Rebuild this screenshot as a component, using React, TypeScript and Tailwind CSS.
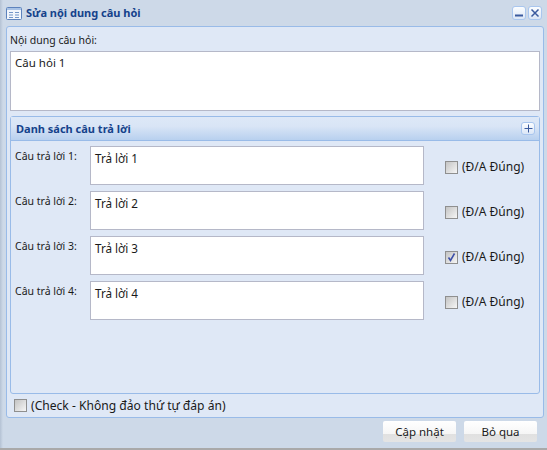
function Check({ checked = false }: { checked?: boolean }) {
  return (
    <span className="w-[13px] h-[13px] shrink-0 border border-[#8f8f8f] bg-gradient-to-br from-[#c4c4c4] to-[#f6f6f6] flex items-center justify-center">
      {checked && (
        <svg width="11" height="11" viewBox="0 0 11 11">
          <path d="M2.5 5.5 L4.5 8.5 L8.5 1.5" fill="none" stroke="#3c4fa8" strokeWidth="1.6" />
        </svg>
      )}
    </span>
  );
}

function ToolBtn({ children, size }: { children: React.ReactNode; size: string }) {
  return (
    <span className={`${size} rounded-[3px] border border-[#a9c6ee] bg-gradient-to-b from-[#fbfdff] to-[#dbe6f6] flex items-center justify-center`}>
      {children}
    </span>
  );
}

const answers = [
  { label: "Câu trả lời 1:", value: "Trả lời 1", checked: false },
  { label: "Câu trả lời 2:", value: "Trả lời 2", checked: false },
  { label: "Câu trả lời 3:", value: "Trả lời 3", checked: true },
  { label: "Câu trả lời 4:", value: "Trả lời 4", checked: false },
];

export default function App() {
  return (
    <div
      className="w-[547px] h-[450px] overflow-hidden bg-[#a9a9a9] text-[12px] leading-[14px] text-[#1a1a1a]"
      style={{ fontFamily: '"Noto Sans", "DejaVu Sans", sans-serif' }}
    >
      <div className="h-[448px] bg-[linear-gradient(90deg,#b4c2d4_0px,#cdd9e8_3px,#cdd9e8_100%)] flex flex-col">
        <div className="h-[26px] shrink-0 flex items-center pl-[6px] pr-[5px]">
          <svg width="16" height="13" viewBox="0 0 16 13" className="mr-[4px]">
            <rect x="0.5" y="0.5" width="15" height="12" rx="1" fill="#f2f6fc" stroke="#5d83bd" />
            <rect x="1" y="1" width="14" height="2" fill="#a9c3e6" />
            <path d="M3 5.5 H7 M3 8 H7 M3 10.5 H7 M9 5.5 H13 M9 8 H13 M9 10.5 H13" stroke="#7396c8" strokeWidth="1" />
          </svg>
          <span className="font-bold text-[#15428b] text-[11px]">Sửa nội dung câu hỏi</span>
          <div className="ml-auto flex gap-[2px]">
            <ToolBtn size="w-[14px] h-[14px]">
              <svg width="10" height="10" viewBox="0 0 10 10"><path d="M1 7.5 H9" stroke="#3a5a9e" strokeWidth="2" /></svg>
            </ToolBtn>
            <ToolBtn size="w-[14px] h-[14px]">
              <svg width="10" height="10" viewBox="0 0 10 10"><path d="M1.5 1.5 L8.5 8.5 M8.5 1.5 L1.5 8.5" stroke="#3a5a9e" strokeWidth="1.5" /></svg>
            </ToolBtn>
          </div>
        </div>

        <div className="ml-[6px] mr-[3px] h-[392px] shrink-0 border border-[#99bbe8] rounded-[3px] bg-[#dfe8f6] px-[3px] flex flex-col">
          <div className="h-[24px] shrink-0 flex items-center pt-[1px] text-[10.5px]">Nội dung câu hỏi:</div>
          <div className="h-[60px] shrink-0 bg-white border border-[#b5b8c8] px-[4px] pt-[3px] text-[11.5px] leading-[16px]">Câu hỏi 1</div>

          <div className="mt-[5px] h-[278px] shrink-0 border border-[#99bbe8] rounded-[3px] flex flex-col">
            <div className="h-[24px] shrink-0 border-b border-[#99bbe8] bg-[linear-gradient(#dde8f7_0%,#d9e5f6_40%,#b8d0ef_100%)] flex items-center pl-[5px] pr-[4px]">
              <span className="font-bold text-[#15428b] text-[11px]">Danh sách câu trả lời</span>
              <span className="ml-auto">
                <ToolBtn size="w-[14px] h-[13px]">
                  <svg width="9" height="9" viewBox="0 0 9 9"><path d="M4.5 0.5 V8.5 M0.5 4.5 H8.5" stroke="#3a5a9e" strokeWidth="1" /></svg>
                </ToolBtn>
              </span>
            </div>
            <div className="flex flex-col gap-[6px] pt-[5px]">
              {answers.map((a) => (
                <div key={a.label} className="h-[39px] flex items-start">
                  <span className="w-[79px] pl-[4px] pt-[3px] shrink-0 text-[10.5px]">{a.label}</span>
                  <div className="w-[334px] h-[39px] shrink-0 bg-white border border-[#b5b8c8] px-[4px] pt-[3px] text-[11.7px] leading-[16px]">{a.value}</div>
                  <div className="ml-[21px] h-[39px] flex items-center gap-[4px] pt-[3px]">
                    <Check checked={a.checked} />
                    <span className="text-[12px] whitespace-nowrap">(Đ/A Đúng)</span>
                  </div>
                </div>
              ))}
            </div>
          </div>

          <div className="flex-1 flex items-center gap-[4px] pl-[4px]">
            <Check />
            <span className="text-[12.1px]">(Check - Không đảo thứ tự đáp án)</span>
          </div>
        </div>

        <div className="flex-1 flex justify-end items-start gap-[8px] pr-[10px] pt-[3px]">
          <button className="w-[73px] h-[21px] rounded-[2px] bg-[linear-gradient(#ffffff_0%,#f6f6f6_60%,#e0e0e0_61%,#e4e4e4_100%)] flex items-center justify-center text-[11.5px]">Cập nhật</button>
          <button className="w-[73px] h-[21px] rounded-[2px] bg-[linear-gradient(#ffffff_0%,#f6f6f6_60%,#e0e0e0_61%,#e4e4e4_100%)] flex items-center justify-center text-[11.5px]">Bỏ qua</button>
        </div>
      </div>
    </div>
  );
}
